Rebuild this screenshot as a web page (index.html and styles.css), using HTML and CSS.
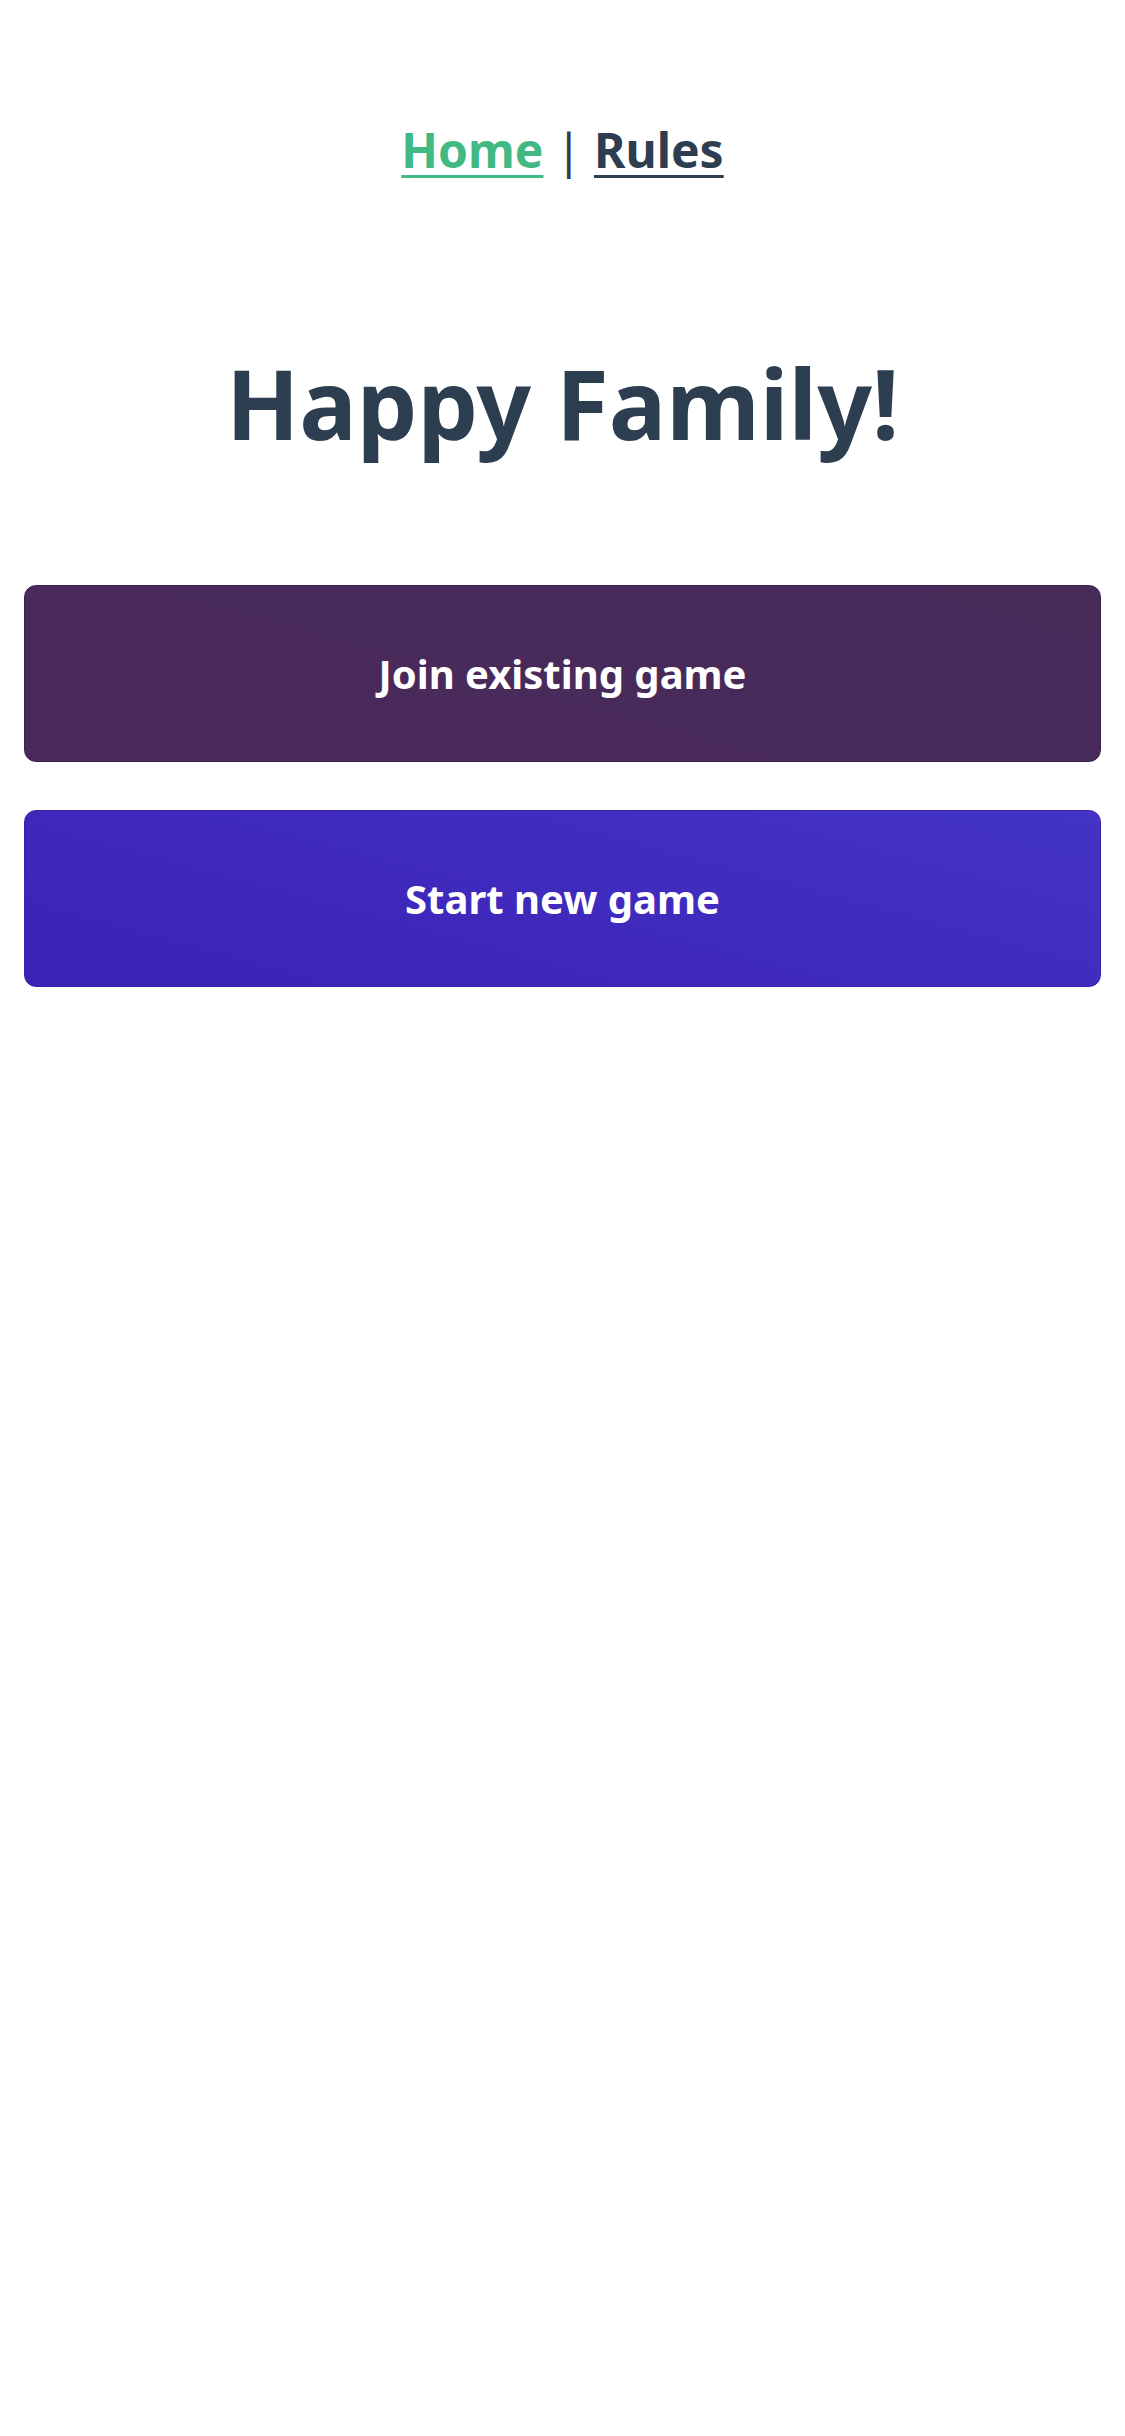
FILE: index.html
```html
<!DOCTYPE html>
<html lang="en">
<head>
<meta charset="utf-8">
<title>Happy Family!</title>
<link rel="stylesheet" href="styles.css">
</head>
<body>
<div class="app">
  <nav class="nav">
    <a class="nav-link active" href="#">Home</a>
    <span class="sep">|</span>
    <a class="nav-link" href="#">Rules</a>
  </nav>
  <h1 class="title">Happy Family!</h1>
  <div class="actions">
    <button class="btn btn-join">Join existing game</button>
    <button class="btn btn-start">Start new game</button>
  </div>
</div>
</body>
</html>
```
FILE: styles.css
```css
html, body {
  margin: 0;
  padding: 0;
  background: #ffffff;
}
.app {
  font-family: "Noto Sans", "Open Sans", sans-serif;
  color: #2c3e50;
  text-align: center;
  display: flex;
  flex-direction: column;
}
.nav {
  padding-top: 110px;
  font-size: 48px;
  font-weight: 700;
  line-height: 80px;
  display: flex;
  justify-content: center;
  gap: 12px;
}
.nav-link {
  color: #2c3e50;
  text-decoration: underline;
  text-decoration-thickness: 3px;
  text-underline-offset: 7px;
}
.nav-link.active {
  color: #42b983;
}
.sep {
  font-weight: 400;
}
.title {
  margin: 165px 0 0;
  font-size: 96px;
  font-weight: 700;
  line-height: 1;
}
.actions {
  margin-top: 134px;
  padding: 0 24px;
  display: flex;
  flex-direction: column;
  gap: 48px;
}
.btn {
  height: 177px;
  border-radius: 12px;
  font-family: "Noto Sans", "Open Sans", sans-serif;
  font-size: 40px;
  font-weight: 700;
  color: #ffffff;
  cursor: pointer;
}
.btn-join {
  background: linear-gradient(15deg, #4a295c, #462b59);
  border: 1px solid #3c1f4e;
}
.btn-start {
  background: linear-gradient(15deg, #3b21b4, #4334c6);
  border: 1px solid #3a22b0;
}
```
